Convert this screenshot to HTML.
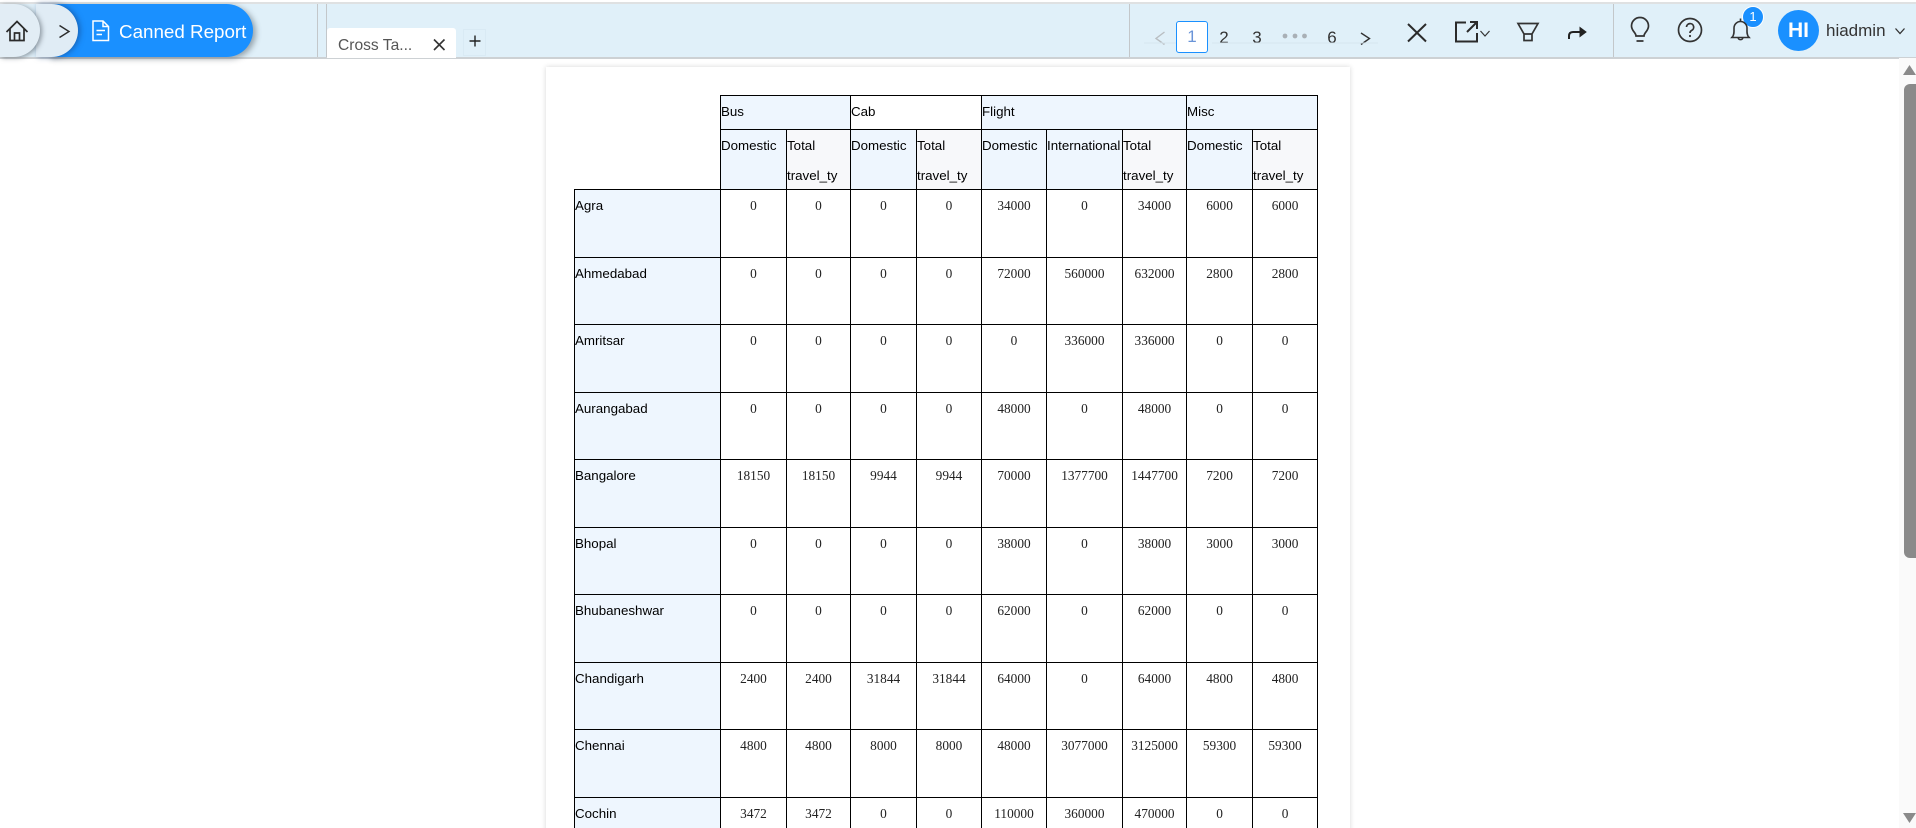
<!DOCTYPE html>
<html>
<head>
<meta charset="utf-8">
<title>Canned Report</title>
<style>
html,body{margin:0;padding:0;width:1916px;height:828px;overflow:hidden;background:#fff;font-family:"Liberation Sans",sans-serif}
#root{position:relative;width:1916px;height:828px;overflow:hidden;background:#fff}
.abs{position:absolute}
#topline{position:absolute;left:0;top:2px;width:1916px;height:2px;background:#dfe1e2}
#bar{position:absolute;left:0;top:4px;width:1916px;height:53px;background:#e0f0f9;border-bottom:2px solid #cdd1d4;box-sizing:content-box}
.div{position:absolute;top:4px;height:53px;width:1px;background:#c3c7ca}
#pill{position:absolute;left:48px;top:4px;width:205px;height:53px;background:#1a90ff;border-radius:0 27px 27px 0;box-shadow:3px 2px 6px rgba(60,70,80,.45)}
#seg2{position:absolute;left:36px;top:4px;width:42px;height:53px;background:#e0ecf5;border-radius:0 27px 27px 0;box-shadow:2px 0 6px rgba(20,60,120,.55)}
#seg1{position:absolute;left:0;top:4px;width:40px;height:53px;background:#e2edf5;border-radius:0 27px 27px 0;box-shadow:2px 1px 5px rgba(60,70,80,.5)}
#canned{position:absolute;left:119px;top:21px;font-size:18.8px;line-height:22px;color:#fff;white-space:nowrap}
#tab{position:absolute;left:327px;top:28px;width:129px;height:30px;background:#fff;border-radius:3px 3px 0 0}
#tabt{position:absolute;left:338px;top:36px;font-size:15.6px;line-height:20px;color:#555;white-space:nowrap}
.pg{position:absolute;top:26px;font-size:17px;line-height:24px;color:#333;text-align:center;width:20px}
#pg1{position:absolute;left:1176px;top:21px;width:32px;height:32px;box-sizing:border-box;background:#fff;border:1px solid #1a90ff;border-radius:3px;text-align:center;font-size:17px;line-height:29px;color:#6a94d8}
#badge{position:absolute;left:1742px;top:6px;width:22px;height:22px;box-sizing:border-box;border:1px solid #fff;border-radius:50%;background:#1a90ff;color:#fff;font-size:13px;line-height:20px;text-align:center}
#avatar{position:absolute;left:1778px;top:10px;width:41px;height:41px;border-radius:50%;background:#1a90ff;color:#fff;font-size:21px;font-weight:bold;line-height:41px;text-align:center}
#user{position:absolute;left:1826px;top:20px;font-size:17px;line-height:22px;color:#333;white-space:nowrap}
#paper{position:absolute;left:546px;top:67px;width:804px;height:780px;background:#fff;box-shadow:0 0 5px rgba(0,0,0,.16)}
#report{position:absolute;left:574px;top:95px;border-collapse:separate;border-spacing:0;table-layout:fixed;width:744px;font-family:"Liberation Sans",sans-serif;font-size:13.33px;color:#000}
#report td{box-sizing:border-box;padding:0;border-left:1px solid #000;border-top:1px solid #000;vertical-align:top;overflow:hidden;white-space:nowrap}
#report td.e{border:0;background:#fff}
#report td.r{border-right:1px solid #000}
#report td.g{background:#eef6fe;line-height:32px}
#report td.h{background:#eef6fe}
#report td.t{background:#f7f8fa}
#report td.c{background:#fff}
#report td div{line-height:30px;height:33px;padding-top:1px;box-sizing:border-box}
#report td div.two{height:59px}
#report td.n{font-family:"Liberation Serif",serif;text-align:center;line-height:32px;color:#222;background:#fff}
#track{position:absolute;left:1899px;top:58px;width:17px;height:770px;background:#fafafa}
#thumb{position:absolute;left:1904px;top:84px;width:12px;height:474px;background:#8a8a8a;border-radius:6px 0 0 6px}
</style>
</head>
<body>
<div id="root">
<div id="topline"></div>
<div id="bar"></div>
<div class="div" style="left:317px"></div>
<div class="div" style="left:326px"></div>
<div class="div" style="left:1129px"></div>
<div class="div" style="left:1613px"></div>
<div id="pill"></div>
<div id="seg2"></div>
<div id="seg1"></div>
<div id="canned">Canned Report</div>
<div id="tab"></div>
<div id="tabt">Cross Ta...</div>
<div class="abs" style="left:463px;top:29px;width:23px;height:27px;border:1px solid #d9eaf4;box-sizing:border-box"></div>
<div id="pg1">1</div>
<div class="pg" style="left:1214px">2</div>
<div class="pg" style="left:1247px">3</div>
<div class="pg" style="left:1322px">6</div>
<div id="badge">1</div>
<div id="avatar">HI</div>
<div id="user">hiadmin</div>
<svg class="abs" style="left:0;top:0" width="1916" height="60" viewBox="0 0 1916 60" fill="none" stroke="#333" stroke-width="1.7">
  <!-- home -->
  <path d="M6.5 32 L17 21.5 L27.5 32 M10 29 V40.5 H24 V29 M14.5 40.5 V33 H19.5 V40.5" stroke="#2b2b2b"/>
  <!-- chevron -->
  <path d="M59.5 25.5 L69 31.5 L59.5 37.5" stroke="#2b2b2b" stroke-width="1.4"/>
  <!-- document -->
  <path d="M93 21 H103 L108.5 26.5 V40.5 H93 Z M103 21 V26.5 H108.5 M96.5 30.5 H105 M96.5 34.5 H102" stroke="#fff" stroke-width="1.5"/>
  <!-- tab close -->
  <path d="M434 39.5 L444.5 50 M444.5 39.5 L434 50" stroke="#333" stroke-width="1.6"/>
  <!-- plus -->
  <path d="M469.5 41 H480.5 M475 35.5 V46.5" stroke="#222" stroke-width="1.4"/>
  <!-- pager arrows -->
  <path d="M1164.5 32 L1156 38.5 L1164.5 44.5" stroke="#b9bec2" stroke-width="1.4"/>
  <path d="M1361 33 L1369.5 38.5 L1361 44.5" stroke="#333" stroke-width="1.4"/>
  <circle cx="1285" cy="36" r="2.4" fill="#a9b0b6" stroke="none"/>
  <circle cx="1295" cy="36" r="2.4" fill="#a9b0b6" stroke="none"/>
  <circle cx="1304.5" cy="36" r="2.4" fill="#a9b0b6" stroke="none"/>
  <path d="M1144 43 H1176 M1212 43 H1378" stroke="#d6e6ef" stroke-width="1"/>
  <!-- close -->
  <path d="M1408 24 L1426 41.5 M1426 24 L1408 41.5" stroke="#2b2b2b" stroke-width="2"/>
  <!-- export -->
  <path d="M1466 22.5 H1456 V41.5 H1477 V33" stroke="#2b2b2b" stroke-width="2"/>
  <path d="M1467 32 L1476 23 M1470 22 H1477 V29" stroke="#2b2b2b" stroke-width="2"/>
  <path d="M1480.5 31 L1485 36 L1489.5 31" stroke="#333" stroke-width="1.2"/>
  <!-- filter -->
  <path d="M1518 23.5 H1538 L1532 34 V40.5 H1524 V34 Z M1524 34 H1532" stroke="#333" stroke-width="1.7"/>
  <!-- share arrow -->
  <path d="M1569 39 V36 Q1569 32 1573 32 H1584" stroke="#222" stroke-width="2"/>
  <path d="M1580 27.5 L1586 32 L1580 36.5 Z" fill="#222" stroke="#222" stroke-width="1"/>
  <!-- bulb -->
  <path d="M1636 36 C1636 32.5 1631.5 31 1631.5 26 A8.5 8.5 0 0 1 1648.5 26 C1648.5 31 1644 32.5 1644 36 Z M1636.5 41 H1643.5" stroke="#333" stroke-width="1.7"/>
  <!-- help -->
  <circle cx="1690" cy="30" r="11.5" stroke="#333" stroke-width="1.7"/>
  <path d="M1686.5 27 A3.6 3.6 0 1 1 1691.5 30.5 Q1690 31.3 1690 33" stroke="#333" stroke-width="1.7"/>
  <circle cx="1690" cy="36" r="1.1" fill="#333" stroke="none"/>
  <!-- bell -->
  <path d="M1732 37.5 C1734.5 35 1734 31 1734 28 A6.5 6.5 0 0 1 1747 28 C1747 31 1746.5 35 1749 37.5 Z M1731 37.5 H1750 M1740.5 21.5 V18.5" stroke="#333" stroke-width="1.6"/>
  <path d="M1738 38 A2.7 2.7 0 0 0 1743 38" stroke="#333" stroke-width="1.4"/>
  <!-- user chevron -->
  <path d="M1895.5 28.5 L1900 33.5 L1904.5 28.5" stroke="#333" stroke-width="1.3"/>
</svg>

<div id="paper"></div>
<table id="report">
<colgroup><col style="width:146px"><col style="width:66px"><col style="width:64px"><col style="width:66px"><col style="width:65px"><col style="width:65px"><col style="width:76px"><col style="width:64px"><col style="width:66px"><col style="width:66px"></colgroup>
<tr style="height:34px"><td class="e" rowspan="2"></td><td class="h" colspan="2"><div>Bus</div></td><td class="c" colspan="2"><div>Cab</div></td><td class="h" colspan="3"><div>Flight</div></td><td class="h r" colspan="2"><div>Misc</div></td></tr>
<tr style="height:60px"><td class="h"><div class="two">Domestic</div></td><td class="t"><div class="two">Total<br>travel_ty</div></td><td class="h"><div class="two">Domestic</div></td><td class="t"><div class="two">Total<br>travel_ty</div></td><td class="h"><div class="two">Domestic</div></td><td class="h"><div class="two">International</div></td><td class="t"><div class="two">Total<br>travel_ty</div></td><td class="h"><div class="two">Domestic</div></td><td class="t r"><div class="two">Total<br>travel_ty</div></td></tr>
<tr style="height:68px"><td class="g">Agra</td><td class="n">0</td><td class="n">0</td><td class="n">0</td><td class="n">0</td><td class="n">34000</td><td class="n">0</td><td class="n">34000</td><td class="n">6000</td><td class="n r">6000</td></tr>
<tr style="height:67px"><td class="g">Ahmedabad</td><td class="n">0</td><td class="n">0</td><td class="n">0</td><td class="n">0</td><td class="n">72000</td><td class="n">560000</td><td class="n">632000</td><td class="n">2800</td><td class="n r">2800</td></tr>
<tr style="height:68px"><td class="g">Amritsar</td><td class="n">0</td><td class="n">0</td><td class="n">0</td><td class="n">0</td><td class="n">0</td><td class="n">336000</td><td class="n">336000</td><td class="n">0</td><td class="n r">0</td></tr>
<tr style="height:67px"><td class="g">Aurangabad</td><td class="n">0</td><td class="n">0</td><td class="n">0</td><td class="n">0</td><td class="n">48000</td><td class="n">0</td><td class="n">48000</td><td class="n">0</td><td class="n r">0</td></tr>
<tr style="height:68px"><td class="g">Bangalore</td><td class="n">18150</td><td class="n">18150</td><td class="n">9944</td><td class="n">9944</td><td class="n">70000</td><td class="n">1377700</td><td class="n">1447700</td><td class="n">7200</td><td class="n r">7200</td></tr>
<tr style="height:67px"><td class="g">Bhopal</td><td class="n">0</td><td class="n">0</td><td class="n">0</td><td class="n">0</td><td class="n">38000</td><td class="n">0</td><td class="n">38000</td><td class="n">3000</td><td class="n r">3000</td></tr>
<tr style="height:68px"><td class="g">Bhubaneshwar</td><td class="n">0</td><td class="n">0</td><td class="n">0</td><td class="n">0</td><td class="n">62000</td><td class="n">0</td><td class="n">62000</td><td class="n">0</td><td class="n r">0</td></tr>
<tr style="height:67px"><td class="g">Chandigarh</td><td class="n">2400</td><td class="n">2400</td><td class="n">31844</td><td class="n">31844</td><td class="n">64000</td><td class="n">0</td><td class="n">64000</td><td class="n">4800</td><td class="n r">4800</td></tr>
<tr style="height:68px"><td class="g">Chennai</td><td class="n">4800</td><td class="n">4800</td><td class="n">8000</td><td class="n">8000</td><td class="n">48000</td><td class="n">3077000</td><td class="n">3125000</td><td class="n">59300</td><td class="n r">59300</td></tr>
<tr style="height:68px"><td class="g">Cochin</td><td class="n">3472</td><td class="n">3472</td><td class="n">0</td><td class="n">0</td><td class="n">110000</td><td class="n">360000</td><td class="n">470000</td><td class="n">0</td><td class="n r">0</td></tr>
</table>
<div id="track"></div>
<div id="thumb"></div>
<svg class="abs" style="left:1899px;top:60px" width="17" height="768" viewBox="0 0 17 768">
  <path d="M4 15 L10.5 5 L17 15 Z" fill="#8a8a8a"/>
  <path d="M4 753 H17 L10.5 763 Z" fill="#8a8a8a"/>
</svg>
</div>
</body>
</html>
